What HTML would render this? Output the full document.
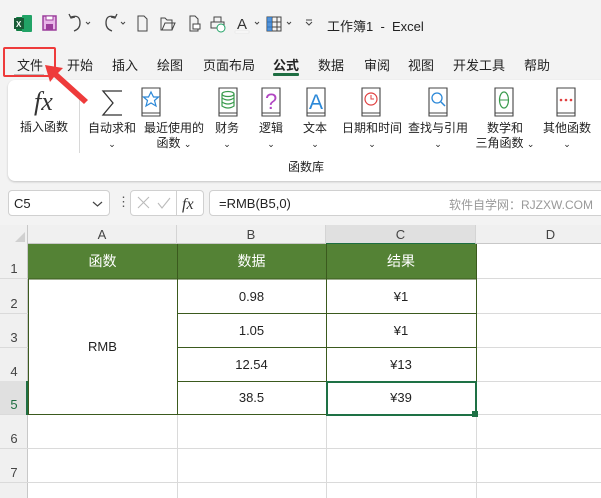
<!DOCTYPE html>
<html><head><meta charset="utf-8"><style>
*{margin:0;padding:0;box-sizing:border-box}
body{width:601px;height:498px;overflow:hidden;background:#f3f3f3;font-family:"Liberation Sans","Noto Sans CJK SC",sans-serif;color:#222;position:relative;font-size:12px}
.a{position:absolute}
.t{position:absolute;white-space:nowrap}
.tab{position:absolute;top:55px;font-size:13px;color:#222}
.lbl{position:absolute;font-size:12px;text-align:center;white-space:nowrap;line-height:15px}
.cell{position:absolute;display:flex;align-items:center;justify-content:center;font-size:13px}
.rn{position:absolute;left:0;width:28px;text-align:center;font-size:13px;color:#444}
.ch{position:absolute;top:225px;height:19px;text-align:center;font-size:13px;color:#444;line-height:20px;border-right:1px solid #d4d4d4}
</style></head><body>
<!-- title bar -->
<svg class="a" style="left:0;top:0" width="601" height="45">
<rect x="16" y="17" width="13" height="14" fill="#107c41" rx="1"/><rect x="22" y="15" width="10" height="17" fill="#21a366" rx="1"/><rect x="14" y="18" width="10" height="11" fill="#185c37"/><text x="16" y="27" font-size="8" fill="#fff" font-family="Liberation Sans" font-weight="bold">X</text>
<rect x="43" y="16" width="13" height="14" fill="#e8b5e8" stroke="#9b3d9b" stroke-width="1.5"/><rect x="46" y="16" width="7" height="4" fill="#fff" stroke="#9b3d9b"/><rect x="46" y="24" width="7" height="6" fill="#9b3d9b"/>
<path d="M71 17 q9 -3 9 6 q0 6 -6 8" stroke="#444" fill="none" stroke-width="1.3"/><path d="M69 14 l2 4 l4 -1" stroke="#444" fill="none" stroke-width="1.3"/>
<path d="M86 22 l2 2 l2 -2" stroke="#444" fill="none"/>
<path d="M115 17 q-9 -3 -9 6 q0 6 6 8" stroke="#444" fill="none" stroke-width="1.3"/><path d="M117 14 l-2 4 l-4 -1" stroke="#444" fill="none" stroke-width="1.3"/>
<path d="M121 22 l2 2 l2 -2" stroke="#444" fill="none"/>
<path d="M138 16 h6 l3 3 v12 h-9 z" stroke="#444" fill="none"/>
<path d="M161 18 h4 l2 2 h5 v10 h-11 z M162 30 l3 -7 h10 l-3 7" stroke="#444" fill="none"/>
<path d="M190 16 h5 l3 3 v12 h-8 z" stroke="#444" fill="none"/><rect x="193" y="24" width="7" height="5" fill="#fff" stroke="#444"/>
<rect x="214" y="17" width="7" height="5" fill="none" stroke="#444"/><rect x="211" y="22" width="13" height="6" fill="none" stroke="#444"/><circle cx="221" cy="28" r="4" fill="#fff" stroke="#21a366"/>
<text x="237" y="29" font-size="15" fill="#333" font-family="Liberation Sans">A</text><rect x="235" y="31" width="14" height="2" fill="#fff" stroke="#ddd" stroke-width=".5"/>
<path d="M255 22 l2 2 l2 -2" stroke="#444" fill="none"/>
<rect x="267" y="17" width="14" height="14" fill="none" stroke="#444"/><path d="M267 22 h14 M267 27 h14 M272 17 v14 M277 17 v14" stroke="#444"/><rect x="267" y="17" width="5" height="14" fill="#2b7cd3" opacity=".8"/>
<path d="M287 22 l2 2 l2 -2" stroke="#444" fill="none"/>
<path d="M306 20 h6 M306 22 l3 3 l3 -3" stroke="#444" fill="none"/>
</svg>
<div class="t" style="left:327px;top:16px;font-size:13px">工作簿1 &nbsp;- &nbsp;Excel</div>
<!-- tabs -->
<div class="tab" style="left:17px">文件</div>
<div class="a" style="left:14px;top:74px;width:30px;height:2px;background:#bbb"></div>
<div class="a" style="left:3px;top:47px;width:53px;height:30px;border:2px solid #ee3b3b;border-radius:2px"></div>
<div class="tab" style="left:67px">开始</div>
<div class="tab" style="left:112px">插入</div>
<div class="tab" style="left:157px">绘图</div>
<div class="tab" style="left:203px">页面布局</div>
<div class="tab" style="left:273px;font-weight:bold">公式</div>
<div class="a" style="left:273px;top:73px;width:26px;height:3px;background:#1e6e42;border-radius:1px"></div>
<div class="tab" style="left:318px">数据</div>
<div class="tab" style="left:364px">审阅</div>
<div class="tab" style="left:408px">视图</div>
<div class="tab" style="left:453px">开发工具</div>
<div class="tab" style="left:524px">帮助</div>
<!-- ribbon -->
<div class="a" style="left:8px;top:80px;width:610px;height:101px;background:#fff;border-radius:7px;box-shadow:0 1px 2px rgba(0,0,0,.2)"></div>
<div class="a" style="left:79px;top:98px;width:1px;height:55px;background:#d8d8d8"></div>
<svg class="a" style="left:0;top:80px" width="601" height="45">
<text x="34" y="30" font-size="26" font-style="italic" font-family="Liberation Serif" fill="#333">fx</text>
<path d="M122 11 h-19 l10 12 l-10 12 h19" stroke="#333" fill="none" stroke-width="1.3"/>
<g stroke="#444" fill="#fff" stroke-width="1.1">
<path d="M142 8 h18 v28 h-18 z M142 33 h18"/><path d="M219 8 h18 v28 h-18 z M219 33 h18"/><path d="M262 8 h18 v28 h-18 z M262 33 h18"/><path d="M307 8 h18 v28 h-18 z M307 33 h18"/><path d="M362 8 h18 v28 h-18 z M362 33 h18"/><path d="M429 8 h18 v28 h-18 z M429 33 h18"/><path d="M495 8 h18 v28 h-18 z M495 33 h18"/><path d="M557 8 h18 v28 h-18 z M557 33 h18"/>
</g>
<path d="M151 12 l2.5 5 h5 l-4 3.5 l1.5 5.5 l-5 -3 l-5 3 l1.5 -5.5 l-4 -3.5 h5 z" stroke="#2b88d8" fill="none" stroke-width="1.2"/>
<g stroke="#3a9b4d" fill="none" stroke-width="1.2"><ellipse cx="228" cy="14" rx="6" ry="2.5"/><path d="M222 14 v12 q6 4 12 0 v-12 M222 18 q6 4 12 0 M222 22 q6 4 12 0"/></g>
<text x="265" y="29" font-size="22" fill="#b146c2" font-family="Liberation Sans">?</text>
<text x="309" y="29" font-size="21" fill="#2b88d8" font-family="Liberation Sans">A</text>
<circle cx="371" cy="19" r="6" stroke="#e04040" fill="none" stroke-width="1.2"/><path d="M371 15 v4 h3" stroke="#e04040" fill="none"/>
<circle cx="437" cy="18" r="5" stroke="#2b88d8" fill="none" stroke-width="1.3"/><path d="M441 22 l4 4" stroke="#2b88d8" stroke-width="1.5"/>
<ellipse cx="504" cy="20" rx="4.5" ry="8" stroke="#3a9b4d" fill="none" stroke-width="1.2"/><path d="M500 20 h9" stroke="#3a9b4d"/>
<g fill="#e04040"><circle cx="561" cy="20" r="1.3"/><circle cx="566" cy="20" r="1.3"/><circle cx="571" cy="20" r="1.3"/></g>
</svg>
<div class="lbl" style="left:20px;top:120px">插入函数</div>
<div class="lbl" style="left:88px;top:121px">自动求和<br><span style="font-size:9px">⌄</span></div>
<div class="lbl" style="left:124px;top:121px;width:100px">最近使用的<br>函数 <span style="font-size:9px">⌄</span></div>
<div class="lbl" style="left:215px;top:121px">财务<br><span style="font-size:9px">⌄</span></div>
<div class="lbl" style="left:259px;top:121px">逻辑<br><span style="font-size:9px">⌄</span></div>
<div class="lbl" style="left:303px;top:121px">文本<br><span style="font-size:9px">⌄</span></div>
<div class="lbl" style="left:342px;top:121px;width:60px">日期和时间<br><span style="font-size:9px">⌄</span></div>
<div class="lbl" style="left:408px;top:121px;width:60px">查找与引用<br><span style="font-size:9px">⌄</span></div>
<div class="lbl" style="left:474px;top:121px;width:62px">数学和<br>三角函数 <span style="font-size:9px">⌄</span></div>
<div class="lbl" style="left:540px;top:121px;width:54px">其他函数<br><span style="font-size:9px">⌄</span></div>
<div class="lbl" style="left:288px;top:160px">函数库</div>
<!-- arrow -->
<svg class="a" style="left:0;top:0" width="120" height="120"><path d="M45 65 L63 68 L58 73 L88 100 L84 104 L54 77 L50 82 Z" fill="#ee3b3b"/></svg>
<!-- formula bar -->
<div class="a" style="left:8px;top:190px;width:102px;height:26px;background:#fff;border:1px solid #d0d0d0;border-radius:4px"></div>
<div class="t" style="left:14px;top:196px;font-size:13px">C5</div>
<svg class="a" style="left:92px;top:199px" width="12" height="10"><path d="M1 3 l4.5 4 l4.5 -4" stroke="#444" fill="none" stroke-width="1.2"/></svg>
<div class="t" style="left:117px;top:194px;font-size:13px;color:#555">⋮</div>
<div class="a" style="left:130px;top:190px;width:47px;height:26px;background:#fff;border:1px solid #d0d0d0;border-radius:4px 0 0 4px"></div>
<div class="a" style="left:177px;top:190px;width:27px;height:26px;background:#fff;border:1px solid #d0d0d0;border-left:none;border-radius:0 4px 4px 0"></div>
<svg class="a" style="left:130px;top:190px" width="75" height="26"><path d="M8 7 l11 11 M19 7 l-11 11" stroke="#bbb" stroke-width="1.1"/><path d="M28 13 l4 5 l8 -10" stroke="#bbb" fill="none" stroke-width="1.1"/><text x="52" y="19" font-size="16" font-style="italic" font-family="Liberation Serif" fill="#333">fx</text></svg>
<div class="a" style="left:209px;top:190px;width:400px;height:26px;background:#fff;border:1px solid #d0d0d0;border-radius:4px"></div>
<div class="t" style="left:219px;top:196px;font-size:13px">=RMB(B5,0)</div>
<div class="t" style="left:449px;top:196px;font-size:12px;color:#999">软件自学网：RJZXW.COM</div>
<!-- grid -->
<div class="a" style="left:0;top:225px;width:601px;height:273px;background:#fff"></div>
<div class="a" style="left:0;top:225px;width:601px;height:19px;background:#f0f0f0;border-bottom:1px solid #c8c8c8"></div>
<div class="a" style="left:0;top:225px;width:28px;height:273px;background:#f0f0f0;border-right:1px solid #c8c8c8"></div>
<svg class="a" style="left:14px;top:231px" width="12" height="12"><path d="M11 1 V11 H1 Z" fill="#d0d0d0"/></svg>
<div class="ch" style="left:28px;width:149px">A</div>
<div class="ch" style="left:177px;width:149px">B</div>
<div class="ch" style="left:326px;width:150px;background:#e0e0e0;border-bottom:2px solid #1e6e42;height:20px">C</div>
<div class="ch" style="left:476px;width:150px">D</div>
<!-- row lines -->
<svg class="a" style="left:0;top:244px" width="601" height="254">
<g stroke="#dadada"><path d="M0 34.5 H601 M0 69.5 H601 M0 103.5 H601 M0 137.5 H601 M0 170.5 H601 M0 204.5 H601 M0 238.5 H601"/><path d="M177.5 0 V254 M326.5 0 V254 M476.5 0 V254"/></g>
<rect x="29" y="36" width="148" height="134" fill="#fff"/>
<rect x="0" y="137" width="28" height="33" fill="#e0e0e0"/><path d="M27 137 V171" stroke="#1e6e42" stroke-width="2"/>
<rect x="28" y="0" width="448" height="35" fill="#548235"/>
<g stroke="#3b5a1e" fill="none"><path d="M28.5 35 V170.5 H476.5 V0 M177.5 0 V170.5 M326.5 0 V170.5 M177 69.5 H476 M177 103.5 H476 M177 137.5 H476 M28 35 H476"/></g>
<rect x="327" y="138" width="149" height="33" fill="none" stroke="#1e7145" stroke-width="2"/>
<rect x="472" y="167" width="6" height="6" fill="#1e7145"/>
</svg>
<div class="rn" style="top:261px">1</div>
<div class="rn" style="top:296px">2</div>
<div class="rn" style="top:330px">3</div>
<div class="rn" style="top:364px">4</div>
<div class="rn" style="top:397px;color:#1e6e42">5</div>
<div class="rn" style="top:431px">6</div>
<div class="rn" style="top:465px">7</div>
<div class="cell" style="left:28px;top:244px;width:149px;height:34px;color:#fff;font-size:14px">函数</div>
<div class="cell" style="left:177px;top:244px;width:149px;height:34px;color:#fff;font-size:14px">数据</div>
<div class="cell" style="left:326px;top:244px;width:150px;height:34px;color:#fff;font-size:14px">结果</div>
<div class="cell" style="left:28px;top:279px;width:149px;height:135px">RMB</div>
<div class="cell" style="left:177px;top:279px;width:149px;height:34px">0.98</div>
<div class="cell" style="left:177px;top:313px;width:149px;height:34px">1.05</div>
<div class="cell" style="left:177px;top:347px;width:149px;height:34px">12.54</div>
<div class="cell" style="left:177px;top:381px;width:149px;height:33px">38.5</div>
<div class="cell" style="left:326px;top:279px;width:150px;height:34px">¥1</div>
<div class="cell" style="left:326px;top:313px;width:150px;height:34px">¥1</div>
<div class="cell" style="left:326px;top:347px;width:150px;height:34px">¥13</div>
<div class="cell" style="left:326px;top:381px;width:150px;height:33px">¥39</div>
</body></html>
